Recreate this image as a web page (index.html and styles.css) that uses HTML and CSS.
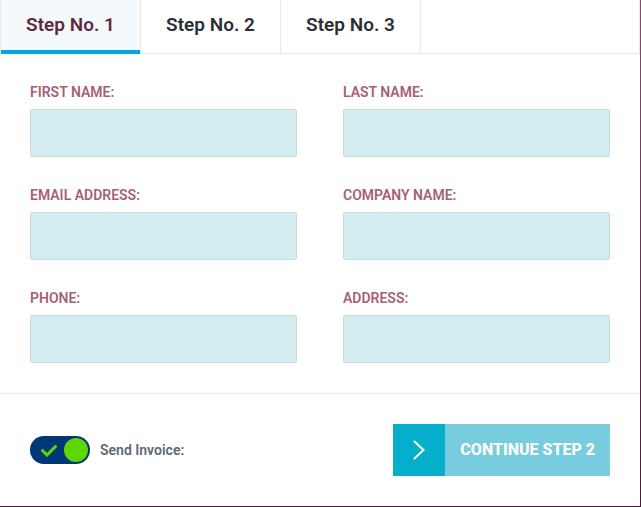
FILE: index.html
```html
<!DOCTYPE html>
<html lang="en">
<head>
<meta charset="utf-8">
<meta name="viewport" content="width=device-width, initial-scale=1">
<title>Step No. 1</title>
<link rel="stylesheet" href="styles.css">
</head>
<body>
<form class="wizard">
  <nav class="tabs">
    <a class="tab tab-active" href="#step-1" aria-current="step">Step No. 1</a>
    <a class="tab" href="#step-2">Step No. 2</a>
    <a class="tab" href="#step-3">Step No. 3</a>
  </nav>
  <div class="fields">
    <div class="field">
      <label for="first-name">FIRST NAME:</label>
      <input id="first-name" type="text">
    </div>
    <div class="field">
      <label for="last-name">LAST NAME:</label>
      <input id="last-name" type="text">
    </div>
    <div class="field">
      <label for="email">EMAIL ADDRESS:</label>
      <input id="email" type="email">
    </div>
    <div class="field">
      <label for="company">COMPANY NAME:</label>
      <input id="company" type="text">
    </div>
    <div class="field">
      <label for="phone">PHONE:</label>
      <input id="phone" type="tel">
    </div>
    <div class="field">
      <label for="address">ADDRESS:</label>
      <input id="address" type="text">
    </div>
  </div>
  <footer class="actions">
    <div class="invoice">
      <span class="switch">
        <input id="send-invoice" type="checkbox" checked>
        <svg class="switch-check" viewBox="0 0 16 12" aria-hidden="true"><path d="M1.5 5.5 6 10 14.5 1.5"/></svg>
      </span>
      <label for="send-invoice">Send Invoice:</label>
    </div>
    <button class="continue" type="button">
      <span class="continue-icon"><svg viewBox="0 0 12 20" aria-hidden="true"><path d="M1.5 1.5 10.5 10 1.5 18.5"/></svg></span>
      <span class="continue-text">CONTINUE STEP 2</span>
    </button>
  </footer>
</form>
</body>
</html>
```
FILE: styles.css
```css
* {
  box-sizing: border-box;
}

body {
  margin: 0;
  padding: 0 1px 1px 0;
  min-height: 100vh;
  display: flex;
  background: linear-gradient(#8a4a6c, #4a1a33);
  font-family: Roboto, "Liberation Sans", sans-serif;
}

.wizard {
  flex: 1;
  background: #fff;
}

.tabs {
  display: flex;
  height: 54px;
  border: solid #e8eaea;
  border-width: 0 1px 1px;
}

.tab {
  min-width: 140px;
  height: 54px;
  padding: 13px 0 0;
  border-right: 1px solid #e8e9ea;
  color: #2b2f33;
  font-size: 19px;
  font-weight: 600;
  line-height: 24px;
  text-align: center;
  text-decoration: none;
}

.tab-active {
  background: linear-gradient(#00a5e5, #00a5e5) bottom / 100% 4px no-repeat padding-box, #f4f9fc;
  color: #5e2a41;
}

.fields {
  display: grid;
  grid-template-columns: 1fr 1fr;
  gap: 30px 46px;
  padding: 30px;
}

.field {
  display: flex;
  flex-direction: column;
  gap: 9px;
}

.field label {
  align-self: flex-start;
  color: #a65f76;
  font-size: 14px;
  font-weight: 600;
  line-height: 16px;
}

.field input {
  width: 100%;
  height: 48px;
  padding: 0 14px;
  border: 1px solid #c9d9df;
  border-radius: 2px;
  background: #d3edf1;
  font: inherit;
}

.actions {
  display: flex;
  align-items: center;
  justify-content: space-between;
  padding: 30px;
  border-top: 1px solid #e8eaeb;
}

.invoice {
  display: flex;
  align-items: center;
  gap: 10px;
  color: #5b6a76;
  font-size: 14px;
  font-weight: 600;
  line-height: 16px;
}

.switch {
  position: relative;
  display: flex;
}

.switch input {
  appearance: none;
  display: flex;
  align-items: center;
  width: 60px;
  height: 28px;
  margin: 0;
  padding: 2px;
  border-radius: 14px;
  background: #003777;
}

.switch input::before {
  content: "";
  width: 24px;
  height: 24px;
  border-radius: 50%;
  background: #60d600;
}

.switch input:checked {
  justify-content: flex-end;
}

.switch-check {
  position: absolute;
  left: 11px;
  top: 9px;
  width: 16px;
  height: 12px;
  fill: none;
  stroke: #60d600;
  stroke-width: 3;
  stroke-linecap: round;
  pointer-events: none;
}

.continue {
  display: flex;
  height: 52px;
  padding: 0;
  border: 0;
  background: #77ccdd;
  color: #fff;
  font-family: inherit;
  font-size: 16px;
  font-weight: 800;
  line-height: 20px;
}

.continue-icon {
  display: grid;
  place-items: center;
  width: 52px;
  height: 52px;
  background: #05aeca;
}

.continue-icon svg {
  width: 12px;
  height: 20px;
  fill: none;
  stroke: #fff;
  stroke-width: 2;
  stroke-linecap: round;
}

.continue-text {
  align-self: center;
  padding: 0 15px;
}
```
